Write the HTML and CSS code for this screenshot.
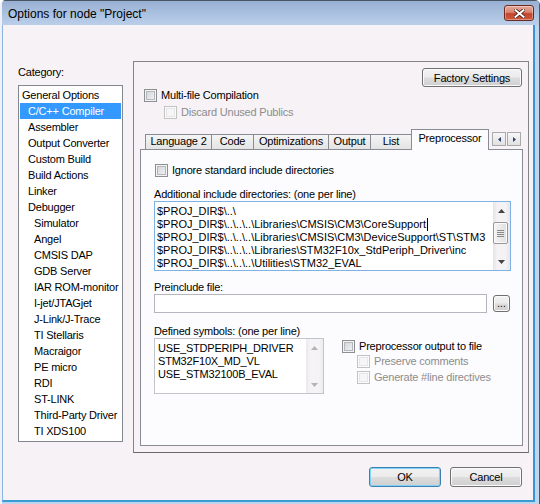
FILE: index.html
```html
<!DOCTYPE html>
<html>
<head>
<meta charset="utf-8">
<title>Options for node "Project"</title>
<link rel="stylesheet" href="styles.css">
</head>
<body>
<div class="window">
  <div class="titlebar">
    <span class="title">Options for node "Project"</span>
    <button class="close" aria-label="Close">
      <svg width="11" height="9" viewBox="0 0 11 9">
        <path d="M1.5 1.2 L9.5 7.8 M9.5 1.2 L1.5 7.8" stroke="#4b1e16" stroke-width="3.6" stroke-linecap="square"/>
        <path d="M1.5 1.2 L9.5 7.8 M9.5 1.2 L1.5 7.8" stroke="#ffffff" stroke-width="2" stroke-linecap="square"/>
      </svg>
    </button>
  </div>

  <div class="client">
    <div class="main">
      <div class="category">
        <div class="cat-label">Category:</div>
        <ul class="cat-list">
          <li class="l0">General Options</li>
          <li class="l1 sel">C/C++ Compiler</li>
          <li class="l1">Assembler</li>
          <li class="l1">Output Converter</li>
          <li class="l1">Custom Build</li>
          <li class="l1">Build Actions</li>
          <li class="l1">Linker</li>
          <li class="l1">Debugger</li>
          <li class="l2">Simulator</li>
          <li class="l2">Angel</li>
          <li class="l2">CMSIS DAP</li>
          <li class="l2">GDB Server</li>
          <li class="l2">IAR ROM-monitor</li>
          <li class="l2">I-jet/JTAGjet</li>
          <li class="l2">J-Link/J-Trace</li>
          <li class="l2">TI Stellaris</li>
          <li class="l2">Macraigor</li>
          <li class="l2">PE micro</li>
          <li class="l2">RDI</li>
          <li class="l2">ST-LINK</li>
          <li class="l2">Third-Party Driver</li>
          <li class="l2">TI XDS100</li>
        </ul>
      </div>

      <div class="panel">
        <div class="top-row">
          <button class="btn factory">Factory Settings</button>
        </div>
        <div class="check multi"><span class="box"></span>Multi-file Compilation</div>
        <div class="check disabled discard"><span class="box"></span>Discard Unused Publics</div>

        <div class="tabstrip">
          <span class="tab t-lang">Language 2</span>
          <span class="tab t-code">Code</span>
          <span class="tab t-opt">Optimizations</span>
          <span class="tab t-out">Output</span>
          <span class="tab t-list">List</span>
          <span class="tab t-pre sel">Preprocessor</span>
          <span class="tab-arrows">
            <span class="arrow">
              <svg width="3" height="5" viewBox="0 0 3 5"><path d="M3 0 L0 2.5 L3 5Z" fill="#2e3f70"/></svg>
            </span>
            <span class="arrow">
              <svg width="3" height="5" viewBox="0 0 3 5"><path d="M0 0 L3 2.5 L0 5Z" fill="#2e3f70"/></svg>
            </span>
          </span>
        </div>

        <div class="page">
          <div class="check ignore"><span class="box"></span>Ignore standard include directories</div>

          <div class="field-label inc-label">Additional include directories: (one per line)</div>
          <div class="textbox incbox">
            <div class="lines">
              <div>$PROJ_DIR$\..\</div>
              <div>$PROJ_DIR$\..\..\..\Libraries\CMSIS\CM3\CoreSupport<span class="caret"></span></div>
              <div>$PROJ_DIR$\..\..\..\Libraries\CMSIS\CM3\DeviceSupport\ST\STM3</div>
              <div>$PROJ_DIR$\..\..\..\Libraries\STM32F10x_StdPeriph_Driver\inc</div>
              <div>$PROJ_DIR$\..\..\..\Utilities\STM32_EVAL</div>
            </div>
            <div class="vscroll">
              <span class="sb-btn">
                <svg width="7" height="4" viewBox="0 0 7 4"><path d="M0 4 L3.5 0 L7 4Z" fill="#444"/></svg>
              </span>
              <span class="sb-track">
                <span class="thumb">
                  <svg width="7" height="7" viewBox="0 0 7 7">
                    <path d="M0 0.5 H7 M0 2.5 H7 M0 4.5 H7 M0 6.5 H7" stroke="#8a8a8a" stroke-width="1"/>
                  </svg>
                </span>
              </span>
              <span class="sb-btn">
                <svg width="7" height="4" viewBox="0 0 7 4"><path d="M0 0 L3.5 4 L7 0Z" fill="#444"/></svg>
              </span>
            </div>
          </div>

          <div class="field-label pre-label">Preinclude file:</div>
          <div class="pre-row">
            <div class="textbox preinput"></div>
            <button class="btn browse">...</button>
          </div>

          <div class="field-label def-label">Defined symbols: (one per line)</div>
          <div class="bottom-row">
            <div class="textbox symbox">
              <div class="lines">
                <div>USE_STDPERIPH_DRIVER</div>
                <div>STM32F10X_MD_VL</div>
                <div>USE_STM32100B_EVAL</div>
              </div>
              <div class="vscroll off">
                <span class="sb-btn">
                  <svg width="7" height="4" viewBox="0 0 7 4"><path d="M0 4 L3.5 0 L7 4Z" fill="#b4b4b4"/></svg>
                </span>
                <span class="sb-track"></span>
                <span class="sb-btn">
                  <svg width="7" height="4" viewBox="0 0 7 4"><path d="M0 0 L3.5 4 L7 0Z" fill="#b4b4b4"/></svg>
                </span>
              </div>
            </div>
            <div class="pp-col">
              <div class="check"><span class="box"></span>Preprocessor output to file</div>
              <div class="check disabled sub preserve"><span class="box"></span>Preserve comments</div>
              <div class="check disabled sub gen"><span class="box"></span>Generate #line directives</div>
            </div>
          </div>
        </div>
      </div>
    </div>

    <div class="footer">
      <button class="btn ok">OK</button>
      <button class="btn cancel">Cancel</button>
    </div>
  </div>
</div>
</body>
</html>
```

FILE: styles.css
```css
* {
  box-sizing: border-box;
}

html,
body {
  margin: 0;
  padding: 0;
  background: #ffffff;
}

body {
  font-family: "Liberation Sans", Arial, sans-serif;
  font-size: 11px;
  letter-spacing: -0.2px;
  color: #000;
}

/* window frame */
.window {
  width: 540px;
  height: 504px;
  display: flex;
  flex-direction: column;
  background: #bfd4ed;
  border-left: 2px solid #eef2f8;
  border-right: 1px solid #4a5868;
  border-radius: 5px 5px 0 0;
  overflow: hidden;
}

.titlebar {
  height: 25px;
  flex: none;
  display: flex;
  align-items: flex-start;
  justify-content: space-between;
  border-top: 1px solid #4a5564;
  background: linear-gradient(#98b0d3, #bbcfea);
  padding: 0 5px 0 6px;
}

.title {
  font-size: 12px;
  letter-spacing: 0;
  line-height: 16px;
  margin-top: 5px;
}

.close {
  margin-top: 4px;
  width: 30px;
  height: 16px;
  padding: 0;
  border: 1px solid #6a2a20;
  border-radius: 3px;
  background: linear-gradient(#e6ab9d, #d98370 45%, #c5442d 55%, #cd5a3f);
  box-shadow: inset 0 0 0 1px rgba(255, 255, 255, 0.35);
  display: flex;
  align-items: center;
  justify-content: center;
}

.close svg {
  display: block;
}

/* dialog client area */
.client {
  flex: 1;
  margin: 0 4px 2px 0;
  background: #f6f2f6;
  border-left: 1px solid #8fb2de;
  border-right: 2px solid #3a94d6;
  border-bottom: 2px solid #3a9cd2;
  padding: 36px 4px 0 15px;
  display: flex;
  flex-direction: column;
}

.main {
  display: flex;
  gap: 10px;
  height: 392px;
  flex: none;
}

/* category list */
.category {
  width: 105px;
  flex: none;
}

.cat-label {
  margin-top: 5px;
  line-height: 13px;
}

.cat-list {
  list-style: none;
  margin: 6px 0 0;
  padding: 1px;
  height: 357px;
  border: 1px solid #828790;
  background: #fff;
}

.cat-list li {
  height: 16px;
  line-height: 16px;
  white-space: nowrap;
}

.cat-list .l0 { padding-left: 2px; }
.cat-list .l1 { padding-left: 8px; }
.cat-list .l2 { padding-left: 14px; }

.cat-list .sel {
  background: #3399ff;
  color: #fff;
}

/* options group */
.panel {
  width: 396px;
  flex: none;
  border: 1px solid #858585;
  border-bottom-color: #6a6a6a;
  display: flex;
  flex-direction: column;
  padding: 0 5px 6px 6px;
}

.top-row {
  display: flex;
  justify-content: flex-end;
  margin: 6px 1px 0 0;
}

.btn {
  font-family: inherit;
  font-size: 11px;
  letter-spacing: inherit;
  color: #000;
  padding: 0;
  border: 1px solid #707070;
  border-radius: 3px;
  background: linear-gradient(#f2f2f2 0%, #ebebeb 48%, #dddddd 52%, #cfcfcf 100%);
  box-shadow: inset 0 0 0 1px #fbfbfb;
}

.factory {
  width: 100px;
  height: 19px;
}

/* checkboxes */
.check {
  display: flex;
  align-items: center;
  gap: 4px;
  height: 13px;
  line-height: 13px;
  white-space: nowrap;
}

.box {
  width: 13px;
  height: 13px;
  flex: none;
  border: 1px solid #8e8f8f;
  background: linear-gradient(135deg, #cdd1d6, #f6f6f7);
  box-shadow: inset 0 0 0 1px #f4f4f4, inset 0 0 0 2px #b4b8bd;
}

.check.disabled {
  color: #8d8d8d;
}

.check.disabled .box {
  border-color: #c3c3c3;
  background: #f6f6f6;
  box-shadow: inset 0 0 0 1px #fbfbfb, inset 0 0 0 2px #e6e6e6;
}

.multi {
  margin: 2px 0 0 4px;
}

.discard {
  margin: 4px 0 0 24px;
}

/* tabs */
.tabstrip {
  margin-top: 10px;
  height: 20px;
  flex: none;
  display: flex;
  align-items: flex-end;
  padding-left: 5px;
}

.tab {
  flex: none;
  height: 15px;
  border: 1px solid #898c95;
  border-bottom: none;
  margin-left: -1px;
  background: linear-gradient(#f4f4f4, #e4e4e4);
  text-align: center;
  line-height: 13px;
  white-space: nowrap;
}

.t-lang { width: 67px; margin-left: 0; }
.t-code { width: 43px; }
.t-opt { width: 76px; }
.t-out { width: 43px; }
.t-list { width: 42px; }
.t-pre { width: 78px; }

.tab.sel {
  height: 21px;
  margin-bottom: -1px;
  background: #fcfcfe;
  line-height: 16px;
  position: relative;
  z-index: 1;
}

.tab-arrows {
  margin-left: auto;
  margin-right: 2px;
  align-self: flex-start;
  margin-top: 3px;
  display: flex;
  gap: 1px;
}

.arrow {
  width: 14px;
  height: 14px;
  border: 1px solid #aaaaaa;
  background: linear-gradient(#f7f7f7, #e1e1e1);
  display: flex;
  align-items: center;
  justify-content: center;
}

.arrow svg,
.sb-btn svg,
.thumb svg {
  display: block;
}

/* tab page */
.page {
  flex: 1;
  border: 1px solid #898c95;
  background: #fcfcfe;
  padding-left: 13px;
  display: flex;
  flex-direction: column;
}

.ignore {
  margin: 14px 0 0 1px;
}

.field-label {
  line-height: 13px;
  white-space: nowrap;
}

.inc-label {
  margin-top: 12px;
  line-height: 11px;
}

.pre-label {
  margin-top: 10px;
}

.def-label {
  margin-top: 13px;
  line-height: 11px;
}

.textbox {
  background: #fff;
  border: 1px solid #b3b6bf;
}

.incbox {
  margin-top: 1px;
  width: 357px;
  height: 70px;
  border-color: #7fb2e5;
  display: flex;
}

.lines {
  flex: 1;
  overflow: hidden;
  padding: 3px 0 0 2px;
  white-space: nowrap;
  line-height: 13px;
}

.incbox .lines {
  letter-spacing: 0;
}

.caret {
  display: inline-block;
  width: 1px;
  height: 13px;
  background: #000;
  vertical-align: top;
  margin-left: 1px;
}

/* scroll bars */
.vscroll {
  width: 17px;
  flex: none;
  display: flex;
  flex-direction: column;
  background: linear-gradient(90deg, #e6e3e6, #f5f2f5 25%, #f5f2f5 75%, #e9e6e9);
}

.sb-btn {
  height: 17px;
  flex: none;
  display: flex;
  align-items: center;
  justify-content: center;
}

.sb-track {
  flex: 1;
  padding-top: 3px;
}

.thumb {
  display: flex;
  align-items: center;
  justify-content: center;
  width: 15px;
  height: 22px;
  border: 1px solid #979797;
  border-radius: 2px;
  background: linear-gradient(90deg, #f4f4f4, #e0e0e0);
  box-shadow: inset 0 0 0 1px #fbfbfb;
}

.vscroll.off {
  background: linear-gradient(90deg, #ece9ec, #f6f3f6 25%, #f6f3f6 75%, #eeebee);
}

.pre-row {
  display: flex;
  gap: 6px;
  align-items: flex-start;
}

.preinput {
  width: 333px;
  height: 19px;
}

.browse {
  width: 17px;
  height: 17px;
  margin-top: 1px;
  font-size: 10px;
  letter-spacing: 0;
  line-height: 12px;
}

.bottom-row {
  margin-top: 1px;
  display: flex;
  align-items: flex-start;
}

.symbox {
  width: 170px;
  height: 56px;
  border-color: #c3c5cc;
  display: flex;
}

.symbox .lines {
  padding-left: 3px;
}

.pp-col {
  margin-left: 18px;
  padding-top: 2px;
}

.check.sub {
  margin-left: 15px;
}

.preserve { margin-top: 2px; }
.gen { margin-top: 3px; }

/* dialog buttons */
.footer {
  display: flex;
  justify-content: flex-end;
  gap: 9px;
  margin: 14px 7px 0 0;
}

.ok,
.cancel {
  width: 72px;
  height: 20px;
}

.ok {
  border-color: #3c7fb1;
  box-shadow: inset 0 0 0 1px #7fd4f8;
}
```
